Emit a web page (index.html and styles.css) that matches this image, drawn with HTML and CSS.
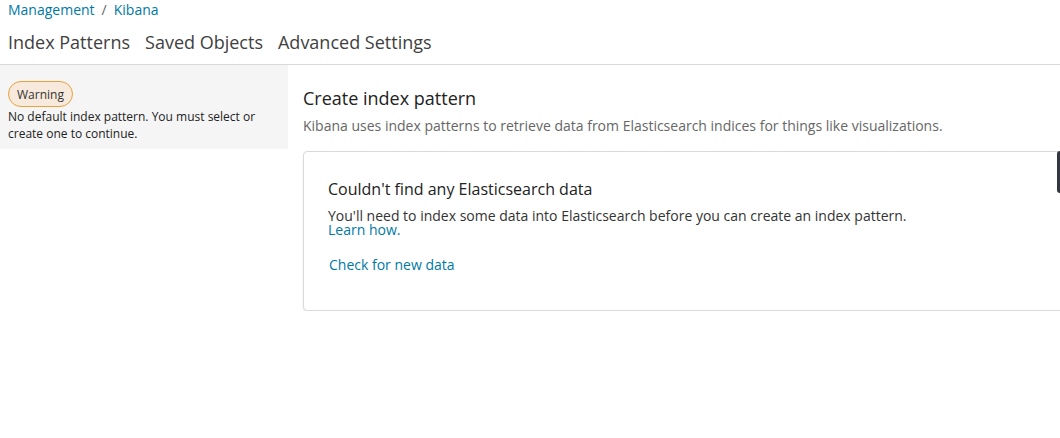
FILE: index.html
```html
<!DOCTYPE html>
<html>
<head>
<meta charset="utf-8">
<link rel="stylesheet" href="styles.css">
</head>
<body>
<header class="top">
  <div class="crumbs"><a class="link">Management</a><span class="sep">/</span><a class="link">Kibana</a></div>
  <nav class="tabs"><span class="tab">Index Patterns</span><span class="tab">Saved Objects</span><span class="tab">Advanced Settings</span></nav>
</header>
<main class="layout">
  <aside class="side">
    <span class="badge">Warning</span>
    <p class="side-text">No default index pattern. You must select or create one to continue.</p>
  </aside>
  <section class="content">
    <h1 class="title">Create index pattern</h1>
    <p class="sub">Kibana uses index patterns to retrieve data from Elasticsearch indices for things like visualizations.</p>
    <div class="card">
      <h2 class="card-title">Couldn't find any Elasticsearch data</h2>
      <p class="card-text">You'll need to index some data into Elasticsearch before you can create an index pattern.<br><a class="link">Learn how.</a></p>
      <a class="link check">Check for new data</a>
    </div>
    <div class="edge"></div>
  </section>
</main>
</body>
</html>
```
FILE: styles.css
```css
* { box-sizing: border-box; }
html, body { margin: 0; padding: 0; background: #fff; }
body { font-family: "Open Sans", "Noto Sans", sans-serif; color: #2d2d2d; width: 1060px; overflow: hidden; }
.link { color: #0079a5; text-decoration: none; }
.top { padding: 0 8px; border-bottom: 1px solid #d9d9d9; }
.crumbs { font-size: 14px; line-height: 20px; padding-top: 0; }
.sep { color: #666; margin: 0 7px; }
.tabs { display: flex; gap: 15px; padding: 10px 0 9px; }
.tab { font-size: 18px; line-height: 25px; color: #3f3f3f; }
.layout { display: flex; align-items: flex-start; position: relative; }
.side { width: 288px; background: #f5f5f5; padding: 16px 8px 7px; }
.badge { display: inline-block; font-size: 12px; line-height: 16px; padding: 5px 8px 3px 8px; border: 1px solid #e8a13c; border-radius: 13px; background: #f7eadc; color: #333; }
.side-text { margin: 1px 0 0; font-size: 12px; line-height: 17px; color: #222; }
.content { flex: 1; padding: 21px 0 0 15px; position: relative; }
.title { margin: 0; font-size: 18px; font-weight: 400; line-height: 25px; color: #222; }
.sub { margin: 5px 0 0; font-size: 14px; line-height: 20px; color: #666; }
.card { margin-top: 15px; margin-right: -10px; border: 1px solid #d9d9d9; border-radius: 4px; box-shadow: 0 2px 2px rgba(0,0,0,0.08); padding: 25px 24px 35px; }
.card-title { margin: 0; font-size: 16px; font-weight: 400; line-height: 24px; color: #222; }
.card-text { margin: 8px 0 0; font-size: 14px; line-height: 14px; color: #333; }
.check { display: inline-block; margin-top: 18px; margin-left: 1px; font-size: 14px; line-height: 20px; }
.edge { position: absolute; top: 86px; right: 0; width: 3px; height: 42px; background: #343741; border-radius: 3px 0 0 3px; }
```
